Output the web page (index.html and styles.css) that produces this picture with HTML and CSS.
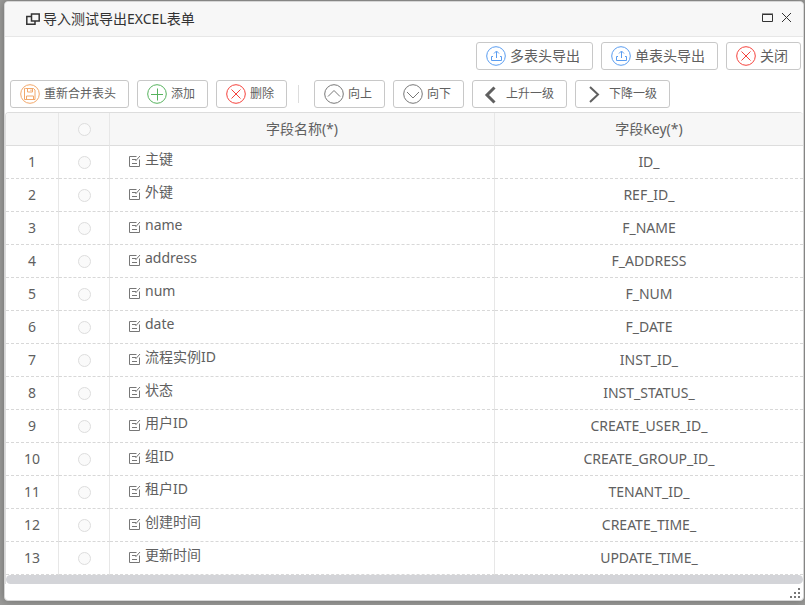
FILE: index.html
```
<!DOCTYPE html>
<html lang="zh-CN">
<head>
<meta charset="utf-8">
<title>导入测试导出EXCEL表单</title>
<link rel="stylesheet" href="styles.css">
</head>
<body>
<svg class="defs" width="0" height="0" aria-hidden="true">
  <symbol id="i-cross" viewBox="0 0 20 20"><circle cx="10" cy="10" r="9.300"/><path d="M5.500 5.500l9 9M14.500 5.500l-9 9"/></symbol>
  <symbol id="i-plus" viewBox="0 0 20 20"><circle cx="10" cy="10" r="9.300"/><path d="M4 10.500h12M10.500 4.500v12"/></symbol>
  <symbol id="i-up" viewBox="0 0 20 20"><circle cx="10" cy="10" r="9.300"/><path d="M4 12.500l6-6 6 6"/></symbol>
  <symbol id="i-down" viewBox="0 0 20 20"><circle cx="10" cy="10" r="9.300"/><path d="M4 8l6 6 6-6"/></symbol>
  <symbol id="i-save" viewBox="0 0 20 20"><circle cx="10" cy="10" r="9.300"/><path d="M5.500 4.500h8l1.500 1.500v9.500h-10.500v-11zM7.500 4.500v3.500h5v-3.500M6.500 15.500v-3.500h7v3.500M11 5.500v1.500"/></symbol>
  <symbol id="i-export" viewBox="0 0 20 20"><circle cx="10" cy="10" r="9.300"/><path d="M10.500 12v-6.500M8 7.500l2.500-2.500 2.500 2.500M7 10.500h-1.500v4h10v-4h-1.500"/></symbol>
  <symbol id="i-edit" viewBox="0 0 12 13"><path d="M7.500 1.500h-7v10h10v-7M3 4.500h4M3 8.500h5M6.500 6l4.500-5"/></symbol>
</svg>
<main class="dialog">
  <header class="titlebar">
    <svg class="title-icon" viewBox="0 0 14 12" aria-hidden="true"><path d="M5 3.500h-4.200v7.700h8.200v-2.700M5.500 1h7.700v7h-7.700z"/></svg>
    <h1>导入测试导出EXCEL表单</h1>
    <button class="win" aria-label="最大化"><svg viewBox="0 0 11 11"><path d="M.5 1.500h10v7h-10zM0 1h11"/></svg></button>
    <button class="win" aria-label="关闭窗口"><svg viewBox="0 0 11 11"><path d="M1 0l9 9M10 0l-9 9"/></svg></button>
  </header>
  <div class="actions">
    <button class="btn"><svg class="blue"><use href="#i-export"/></svg>多表头导出</button>
    <button class="btn"><svg class="blue"><use href="#i-export"/></svg>单表头导出</button>
    <button class="btn"><svg class="red"><use href="#i-cross"/></svg>关闭</button>
  </div>
  <div class="toolbar">
    <button class="btn"><svg class="orange"><use href="#i-save"/></svg>重新合并表头</button>
    <button class="btn"><svg class="green"><use href="#i-plus"/></svg>添加</button>
    <button class="btn"><svg class="red"><use href="#i-cross"/></svg>删除</button>
    <span class="sep"></span>
    <button class="btn"><svg class="gray"><use href="#i-up"/></svg>向上</button>
    <button class="btn"><svg class="gray"><use href="#i-down"/></svg>向下</button>
    <button class="btn level"><svg class="chev" viewBox="0 0 20 20"><path class="thick" d="M13.500 3.500l-7.500 7.500 7.500 7.500"/></svg>上升一级</button>
    <button class="btn level"><svg class="chev" viewBox="0 0 20 20"><path d="M6 3l8 7.500-8 7.500"/></svg>下降一级</button>
  </div>
  <div class="grid">
    <table>
      <colgroup><col class="c-num"><col class="c-pick"><col class="c-name"><col></colgroup>
      <thead>
        <tr><th></th><th><input type="radio" name="all" aria-label="全选"></th><th>字段名称(*)</th><th>字段Key(*)</th></tr>
      </thead>
      <tbody>
        <tr><td>1</td><td><input type="radio" name="row" aria-label="1"></td><td class="name"><svg><use href="#i-edit"/></svg><span>主键</span></td><td>ID_</td></tr>
        <tr><td>2</td><td><input type="radio" name="row" aria-label="2"></td><td class="name"><svg><use href="#i-edit"/></svg><span>外键</span></td><td>REF_ID_</td></tr>
        <tr><td>3</td><td><input type="radio" name="row" aria-label="3"></td><td class="name"><svg><use href="#i-edit"/></svg><span>name</span></td><td>F_NAME</td></tr>
        <tr><td>4</td><td><input type="radio" name="row" aria-label="4"></td><td class="name"><svg><use href="#i-edit"/></svg><span>address</span></td><td>F_ADDRESS</td></tr>
        <tr><td>5</td><td><input type="radio" name="row" aria-label="5"></td><td class="name"><svg><use href="#i-edit"/></svg><span>num</span></td><td>F_NUM</td></tr>
        <tr><td>6</td><td><input type="radio" name="row" aria-label="6"></td><td class="name"><svg><use href="#i-edit"/></svg><span>date</span></td><td>F_DATE</td></tr>
        <tr><td>7</td><td><input type="radio" name="row" aria-label="7"></td><td class="name"><svg><use href="#i-edit"/></svg><span>流程实例ID</span></td><td>INST_ID_</td></tr>
        <tr><td>8</td><td><input type="radio" name="row" aria-label="8"></td><td class="name"><svg><use href="#i-edit"/></svg><span>状态</span></td><td>INST_STATUS_</td></tr>
        <tr><td>9</td><td><input type="radio" name="row" aria-label="9"></td><td class="name"><svg><use href="#i-edit"/></svg><span>用户ID</span></td><td>CREATE_USER_ID_</td></tr>
        <tr><td>10</td><td><input type="radio" name="row" aria-label="10"></td><td class="name"><svg><use href="#i-edit"/></svg><span>组ID</span></td><td>CREATE_GROUP_ID_</td></tr>
        <tr><td>11</td><td><input type="radio" name="row" aria-label="11"></td><td class="name"><svg><use href="#i-edit"/></svg><span>租户ID</span></td><td>TENANT_ID_</td></tr>
        <tr><td>12</td><td><input type="radio" name="row" aria-label="12"></td><td class="name"><svg><use href="#i-edit"/></svg><span>创建时间</span></td><td>CREATE_TIME_</td></tr>
        <tr><td>13</td><td><input type="radio" name="row" aria-label="13"></td><td class="name"><svg><use href="#i-edit"/></svg><span>更新时间</span></td><td>UPDATE_TIME_</td></tr>
      </tbody>
    </table>
    <div class="scroll"></div>
  </div>
  <footer>
    <svg class="grip" viewBox="0 0 10 10" aria-hidden="true"><path d="M8 0h2v2h-2zM4 4h2v2h-2zM8 4h2v2h-2zM0 8h2v2h-2zM4 8h2v2h-2zM8 8h2v2h-2z"/></svg>
  </footer>
</main>
</body>
</html>
```
FILE: styles.css
```
* { box-sizing: border-box; }
body {
  margin: 0;
  padding: 1px 1px 4px 4px;
  background: #9b9b99;
  color: #606060;
  font: 14px/20px "Noto Sans", "Noto Sans CJK SC", sans-serif;
}
button { font: inherit; color: inherit; cursor: pointer; }
svg { fill: none; stroke: currentColor; flex: none; }
.defs { position: absolute; }

.dialog {
  background: #fff;
  border: 1px solid #d6d6d6;
  border-radius: 4px;
  box-shadow: 0 0 8px rgba(0, 0, 0, .3);
}
.titlebar {
  display: flex;
  align-items: center;
  height: 35px;
  padding: 0 11px 1px 21px;
  background: #f7f7f7;
  border-bottom: 1px solid #e7e7e7;
  border-radius: 4px 4px 0 0;
  color: #333;
}
.titlebar h1 { flex: 1; margin: 0 0 0 3px; font-size: 14px; font-weight: 400; }
.title-icon { width: 14px; height: 12px; stroke-width: 1.5; }
.win { display: flex; padding: 0; margin-left: 8px; border: 0; background: none; }
.win svg { width: 11px; height: 11px; }

.btn {
  display: flex;
  align-items: center;
  gap: 4px;
  height: 28px;
  padding: 0 12px 0 9px;
  border: 1px solid #c8c8c8;
  border-radius: 3px;
  background: #fff;
  white-space: nowrap;
}
.btn svg { width: 20px; height: 20px; }
.actions { display: flex; justify-content: flex-end; gap: 8px; padding: 5px 2px 0 5px; }
.toolbar {
  display: flex;
  align-items: center;
  gap: 8px;
  padding: 10px 5px 4px;
  font-size: 12px;
}
.btn.level { gap: 5px; padding-left: 8px; }
.blue { color: #5a9df0; }
.red { color: #f5423c; }
.orange { color: #f2a86b; }
.green { color: #57b35e; }
.gray { color: #777; }
.chev { stroke-width: 2; }
.thick { stroke-width: 3; }
.sep { width: 1px; height: 18px; margin: 0 7px 0 3px; background: #ddd; }

.grid { border: 1px solid #ddd; border-width: 1px 0 0 1px; border-radius: 4px 4px 0 0; overflow: hidden; }
table { width: 100%; table-layout: fixed; border-spacing: 0; }
.c-num { width: 53px; }
.c-pick { width: 51px; }
.c-name { width: 48.3%; }
th, td {
  height: 33px;
  padding: 0;
  border-right: 1px solid #e7e7e7;
  border-bottom: 1px dashed #d8d8d8;
  text-align: center;
  font-weight: 400;
}
th { background: #f7f7f7; border-bottom: 1px solid #ddd; }
th:last-child, td:last-child { border-right: 0; }
.name { padding: 0 0 7px 19px; text-align: left; }
.name svg { width: 12px; height: 13px; margin-right: 4px; vertical-align: -4px; color: #777; }
input[type="radio"] {
  appearance: none;
  display: block;
  width: 13px;
  height: 13px;
  margin: 0 auto;
  border: 1px solid #ddd;
  border-radius: 50%;
  background: #fafafa;
}
.scroll { height: 9px; border-radius: 5px; background: #d3d4d8; }
footer { display: flex; justify-content: flex-end; height: 16px; padding: 4px 3px 0; }
.grip { width: 10px; height: 10px; fill: #777; stroke: none; }
```
